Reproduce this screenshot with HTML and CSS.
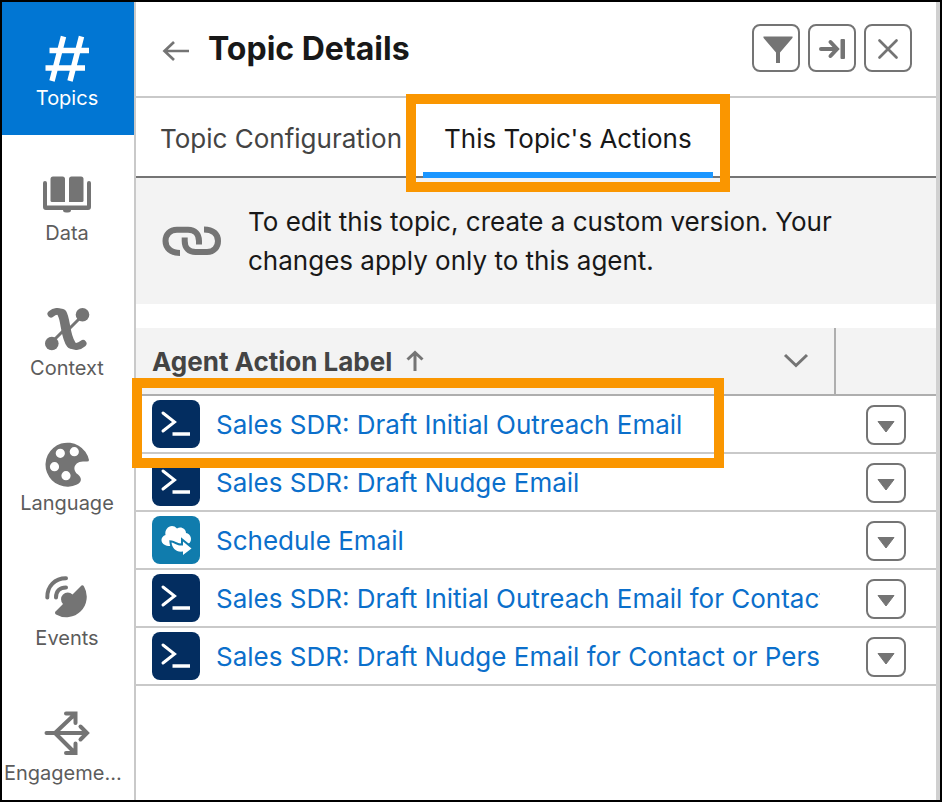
FILE: index.html
```html
<!DOCTYPE html>
<html lang="en">
<head>
    <meta charset="UTF-8">
    <meta name="viewport" content="width=device-width, initial-scale=1.0">
    <title>Topic Details</title>
    <link rel="stylesheet" href="styles.css">
</head>
<body>
    <!-- Shared icons -->
    <svg class="icon-defs" width="0" height="0">
        <symbol id="icon-terminal" viewBox="0 0 48 48">
            <path d="M11 13l11.500 9-11.500 9" fill="none" stroke="#fff" stroke-width="3" stroke-linecap="round"/>
            <path d="M20.500 34H38" stroke="#fff" stroke-width="3.500"/>
        </symbol>
        <symbol id="icon-down" viewBox="0 0 18 12">
            <path d="M1 .5h16L9 11z" fill="#747474" stroke="#747474" stroke-linejoin="round"/>
        </symbol>
    </svg>

    <div class="builder">
        <!-- Sidebar -->
        <nav class="sidebar">
            <a href="#" class="side-item active">
                <svg class="side-icon" viewBox="0 0 48 48"><path d="M20.500 1.500L9 46M38.500 1.500L27 46M6.500 15.500H46M2.500 33H42" fill="none" stroke="currentColor" stroke-width="5.500"/></svg>
                <span class="side-label">Topics</span>
            </a>
            <a href="#" class="side-item">
                <svg class="side-icon" viewBox="0 0 48 48"><g fill="currentColor"><path d="M7.500 9q0-2.500 2.500-2.500h9.500q2.500 0 2.500 2.500v23H9q-1.500 0-1.500-1.500z"/><path d="M40.500 9q0-2.500-2.500-2.500h-9.500q-2.500 0-2.500 2.500v23h13q1.500 0 1.500-1.500z"/><path d="M0 13q0-2 2-2t2 2v22.500h40V13q0-2 2-2t2 2v24q0 3-3 3H28q0 2.500-3 2.500h-2q-3 0-3-2.500H3q-3 0-3-3z"/></g></svg>
                <span class="side-label">Data</span>
            </a>
            <a href="#" class="side-item">
                <svg class="side-icon" viewBox="0 0 48 48"><g fill="none" stroke="currentColor" stroke-linecap="round"><path d="M8 9C11 6.500 16 5 19 8.500" stroke-width="7"/><path d="M19 8.500C23 15 22 31 28 39" stroke-width="9.500"/><path d="M28 39.500C32 43 37 41 40 38.500" stroke-width="7"/><path d="M36 14L26 24M12 34L21 25" stroke-width="3"/></g><circle cx="39.500" cy="9.700" r="6.800" fill="currentColor"/><circle cx="8.800" cy="38.500" r="6.800" fill="currentColor"/></svg>
                <span class="side-label">Context</span>
            </a>
            <a href="#" class="side-item">
                <svg class="side-icon" viewBox="0 0 48 48"><path fill="currentColor" fill-rule="evenodd" d="M46 20A22 22 0 1 0 34 44.500C39 42.500 39 37.500 35 34.500C28 29.500 32 21.500 40 21.500H44Q46 21.500 46 20ZM17.300 8.700a4.600 4.600 0 1 1 0 9.200a4.600 4.600 0 1 1 0-9.200ZM31.300 7.100a4.600 4.600 0 1 1 0 9.200a4.600 4.600 0 1 1 0-9.200ZM11.500 22.100a4.600 4.600 0 1 1 0 9.200a4.600 4.600 0 1 1 0-9.200ZM23 31.100a4.600 4.600 0 1 1 0 9.200a4.600 4.600 0 1 1 0-9.200Z"/></svg>
                <span class="side-label">Language</span>
            </a>
            <a href="#" class="side-item">
                <svg class="side-icon" viewBox="0 0 48 48"><path d="M4.300 22.500C4 11 12 3.300 23 3.300M13 22.500C13 16 17 12.500 23 12.500" fill="none" stroke="currentColor" stroke-width="4" stroke-linecap="round"/><path fill="currentColor" d="M37.500 11.500Q39.500 9 41 11.500A20.500 20.500 0 0 1 13 39.500Q11 37.500 13 36L20 29A5.500 5.500 0 1 1 29.500 19.500Z"/></svg>
                <span class="side-label">Events</span>
            </a>
            <a href="#" class="side-item">
                <svg class="side-icon" viewBox="0 0 48 48"><path d="M3.500 23H43M12 23L31 5M12 23L31 42M23 3.500H32.500V13M23 43H32.500V33.500M37.500 16.500L44 23L37.500 29.500" fill="none" stroke="currentColor" stroke-width="4" stroke-linecap="round"/></svg>
                <span class="side-label">Engagement Channels</span>
            </a>
        </nav>

        <!-- Topic panel -->
        <main class="panel">
            <header class="panel-header">
                <a href="#" class="back" aria-label="Back">
                    <svg width="28" height="22" viewBox="0 0 28 22"><path d="M27 11H2.500M12 2L2.500 11L12 20" fill="none" stroke="#747474" stroke-width="2.700"/></svg>
                </a>
                <h1>Topic Details</h1>
                <div class="tools">
                    <button class="tool" aria-label="Filter">
                        <svg viewBox="2 2 44 44"><path d="M11.500 12.500H40.500Q41 13.500 40 14.500L28 28.500V39H24V28.500L12 14.500Q11 13.500 11.500 12.500Z" fill="#747474"/></svg>
                    </button>
                    <button class="tool" aria-label="Collapse panel">
                        <svg viewBox="2 2 44 44"><path d="M13 25H28M22.500 18L29 25L22.500 32" fill="none" stroke="#747474" stroke-width="4" stroke-linecap="round"/><rect x="32.500" y="15" width="4.500" height="20" rx="1" fill="#747474"/></svg>
                    </button>
                    <button class="tool" aria-label="Close">
                        <svg viewBox="2 2 44 44"><path d="M15.500 16.500L32.500 33.500M32.500 16.500L15.500 33.500" stroke="#747474" stroke-width="2.700" stroke-linecap="round"/></svg>
                    </button>
                </div>
            </header>

            <div class="tabs" role="tablist">
                <button class="tab" role="tab" aria-selected="false">Topic Configuration</button>
                <button class="tab selected" role="tab" aria-selected="true">This Topic's Actions<span class="highlight highlight-tab"></span></button>
            </div>

            <div class="notice">
                <svg class="notice-icon" viewBox="0 0 60 32"><path d="M18 28C9 28 3.500 23 3.500 16C3.500 9.500 8 4.700 15 4.700H26C33 4.700 37 9 37 16V19.500M22.700 12.500V16C22.700 23 27 27 33.500 27H45C52 27 56 22 56 16C56 9 51 4.500 42 4.500" fill="none" stroke="#747474" stroke-width="6"/></svg>
                <p>To edit this topic, create a custom version. Your changes apply only to this agent.</p>
            </div>

            <table class="actions">
                <thead>
                    <tr>
                        <th class="label-col" scope="col">
                            <div class="th-inner">
                                <span>Agent Action Label</span>
                                <svg class="sort-icon" viewBox="0 0 18 22"><path d="M9 21V3M1.500 9.500L9 2.500L16.500 9.500" fill="none" stroke="#747474" stroke-width="3"/></svg>
                                <svg class="chevron" viewBox="0 0 26 16"><path d="M2 2L13 12.500L24 2" fill="none" stroke="#747474" stroke-width="3"/></svg>
                            </div>
                        </th>
                        <th class="menu-col" aria-label="Menu"></th>
                    </tr>
                </thead>
                <tbody>
                    <tr>
                        <td>
                            <div class="action">
                                <svg class="badge"><use href="#icon-terminal"/></svg>
                                <a href="#">Sales SDR: Draft Initial Outreach Email</a>
                                <span class="highlight highlight-row"></span>
                            </div>
                        </td>
                        <td><button class="menu" aria-label="Show actions"><svg><use href="#icon-down"/></svg></button></td>
                    </tr>
                    <tr>
                        <td>
                            <div class="action">
                                <svg class="badge"><use href="#icon-terminal"/></svg>
                                <a href="#">Sales SDR: Draft Nudge Email</a>
                            </div>
                        </td>
                        <td><button class="menu" aria-label="Show actions"><svg><use href="#icon-down"/></svg></button></td>
                    </tr>
                    <tr>
                        <td>
                            <div class="action">
                                <svg class="badge cloud" viewBox="0 0 48 48"><path fill="#fff" d="M13 29C8 27 8.500 20.500 13.500 19C12 12 20 6.500 25 12.500C29 10 34 13 34 17C39 18 40.500 24 37.500 27L29 31L22 28C19 30 16 31 13 29Z"/><path fill="#fff" stroke="#107cad" stroke-width="4" paint-order="stroke" d="M19.500 26.500C23 27 25 30 31 29.500V25.500L39.500 32.500L31 39V35.500C24 36.500 20 32 19.500 26.500Z"/></svg>
                                <a href="#">Schedule Email</a>
                            </div>
                        </td>
                        <td><button class="menu" aria-label="Show actions"><svg><use href="#icon-down"/></svg></button></td>
                    </tr>
                    <tr>
                        <td>
                            <div class="action">
                                <svg class="badge"><use href="#icon-terminal"/></svg>
                                <a href="#">Sales SDR: Draft Initial Outreach Email for Contact</a>
                            </div>
                        </td>
                        <td><button class="menu" aria-label="Show actions"><svg><use href="#icon-down"/></svg></button></td>
                    </tr>
                    <tr>
                        <td>
                            <div class="action">
                                <svg class="badge"><use href="#icon-terminal"/></svg>
                                <a href="#">Sales SDR: Draft Nudge Email for Contact or Person</a>
                            </div>
                        </td>
                        <td><button class="menu" aria-label="Show actions"><svg><use href="#icon-down"/></svg></button></td>
                    </tr>
                </tbody>
            </table>
        </main>
    </div>
</body>
</html>
```
FILE: styles.css
```css
* {
    margin: 0;
    padding: 0;
    box-sizing: border-box;
}

body {
    font-family: Inter, "Liberation Sans", sans-serif;
    font-size: 26px;
    color: #181818;
    background-color: #fff;
}

a {
    text-decoration: none;
}

button {
    font: inherit;
    background: none;
    border: none;
    cursor: pointer;
}

svg {
    display: block;
    flex-shrink: 0;
}

.icon-defs {
    position: absolute;
}

.builder {
    display: flex;
    height: 100vh;
    border: 2px solid #000;
    overflow: hidden;
}

/* Sidebar */
.sidebar {
    width: 134px;
    flex-shrink: 0;
    border-right: 2px solid #c9c9c9;
}

.side-item {
    display: flex;
    flex-direction: column;
    align-items: center;
    gap: 3px;
    height: 135px;
    padding: 33px 2px 0 0;
    color: #747474;
}

.side-item.active {
    height: 133px;
    margin-bottom: 2px;
    background-color: #0176d3;
    color: #fff;
}

.side-icon {
    width: 48px;
    height: 48px;
}

.side-label {
    max-width: 126px;
    overflow: hidden;
    text-overflow: ellipsis;
    white-space: nowrap;
    font-size: 20px;
    line-height: 24px;
    color: #5c5c5c;
}

.active .side-label {
    color: #fff;
}

/* Panel */
.panel {
    flex: 1;
    min-width: 0;
    border-right: 4px solid #d0d0d0;
}

.panel-header {
    display: flex;
    align-items: center;
    height: 96px;
    padding: 0 24px 2px 26px;
    border-bottom: 2px solid #c9c9c9;
}

.back {
    padding-top: 6px;
}

h1 {
    margin-left: 18px;
    font-size: 32px;
    font-weight: 700;
}

.tools {
    display: flex;
    gap: 8px;
    margin-left: auto;
}

.tool {
    width: 48px;
    height: 48px;
    border: 2px solid #747474;
    border-radius: 8px;
}

/* Tabs */
.tabs {
    display: flex;
    height: 80px;
    padding-left: 3px;
    border-bottom: 2px solid #747474;
}

.tab {
    position: relative;
    padding: 2px 21px 0;
    white-space: nowrap;
    color: #444;
}

.tab.selected {
    color: #181818;
}

.tab.selected::after {
    content: "";
    position: absolute;
    left: 0;
    right: 0;
    bottom: -2px;
    height: 6px;
    background-color: #1b96ff;
}

/* Orange callout frames */
.highlight {
    position: absolute;
    z-index: 2;
    border: 10px solid #fa9600;
    pointer-events: none;
}

.highlight-tab {
    top: -4px;
    bottom: -16px;
    left: -17px;
    right: -17px;
}

.highlight-row {
    top: -22px;
    bottom: -20px;
    left: -4px;
    width: 592px;
}

/* Notice */
.notice {
    display: flex;
    align-items: center;
    gap: 26px;
    margin-bottom: 24px;
    padding: 24px 26px;
    background-color: #f3f3f3;
    line-height: 39px;
}

.notice-icon {
    width: 60px;
    height: 32px;
}

/* Actions table */
.actions {
    width: 100%;
    table-layout: fixed;
    border-spacing: 0;
}

.actions th {
    height: 68px;
    background-color: #f3f3f3;
    border-bottom: 2px solid #aeaeae;
    color: #444;
    text-align: left;
}

.label-col {
    border-right: 2px solid #aeaeae;
}

.menu-col {
    width: 100px;
}

.th-inner {
    display: flex;
    align-items: center;
    padding: 0 25px 0 16px;
}

.sort-icon {
    width: 18px;
    height: 22px;
    margin-left: 14px;
}

.chevron {
    width: 26px;
    height: 16px;
    margin-left: auto;
}

.actions td {
    height: 58px;
    border-bottom: 2px solid #c9c9c9;
}

.action {
    position: relative;
    display: flex;
    align-items: center;
    gap: 16px;
    padding: 0 16px;
}

.action a {
    min-width: 0;
    overflow: hidden;
    white-space: nowrap;
    color: #0b6fcb;
}

.badge {
    width: 48px;
    height: 48px;
    border-radius: 8px;
    background-color: #032d60;
}

.badge.cloud {
    background-color: #107cad;
}

.menu {
    display: flex;
    align-items: center;
    justify-content: center;
    width: 40px;
    height: 40px;
    margin: 2px auto 0;
    padding-top: 4px;
    border: 2px solid #747474;
    border-radius: 8px;
}

.menu svg {
    width: 18px;
    height: 12px;
}
```
